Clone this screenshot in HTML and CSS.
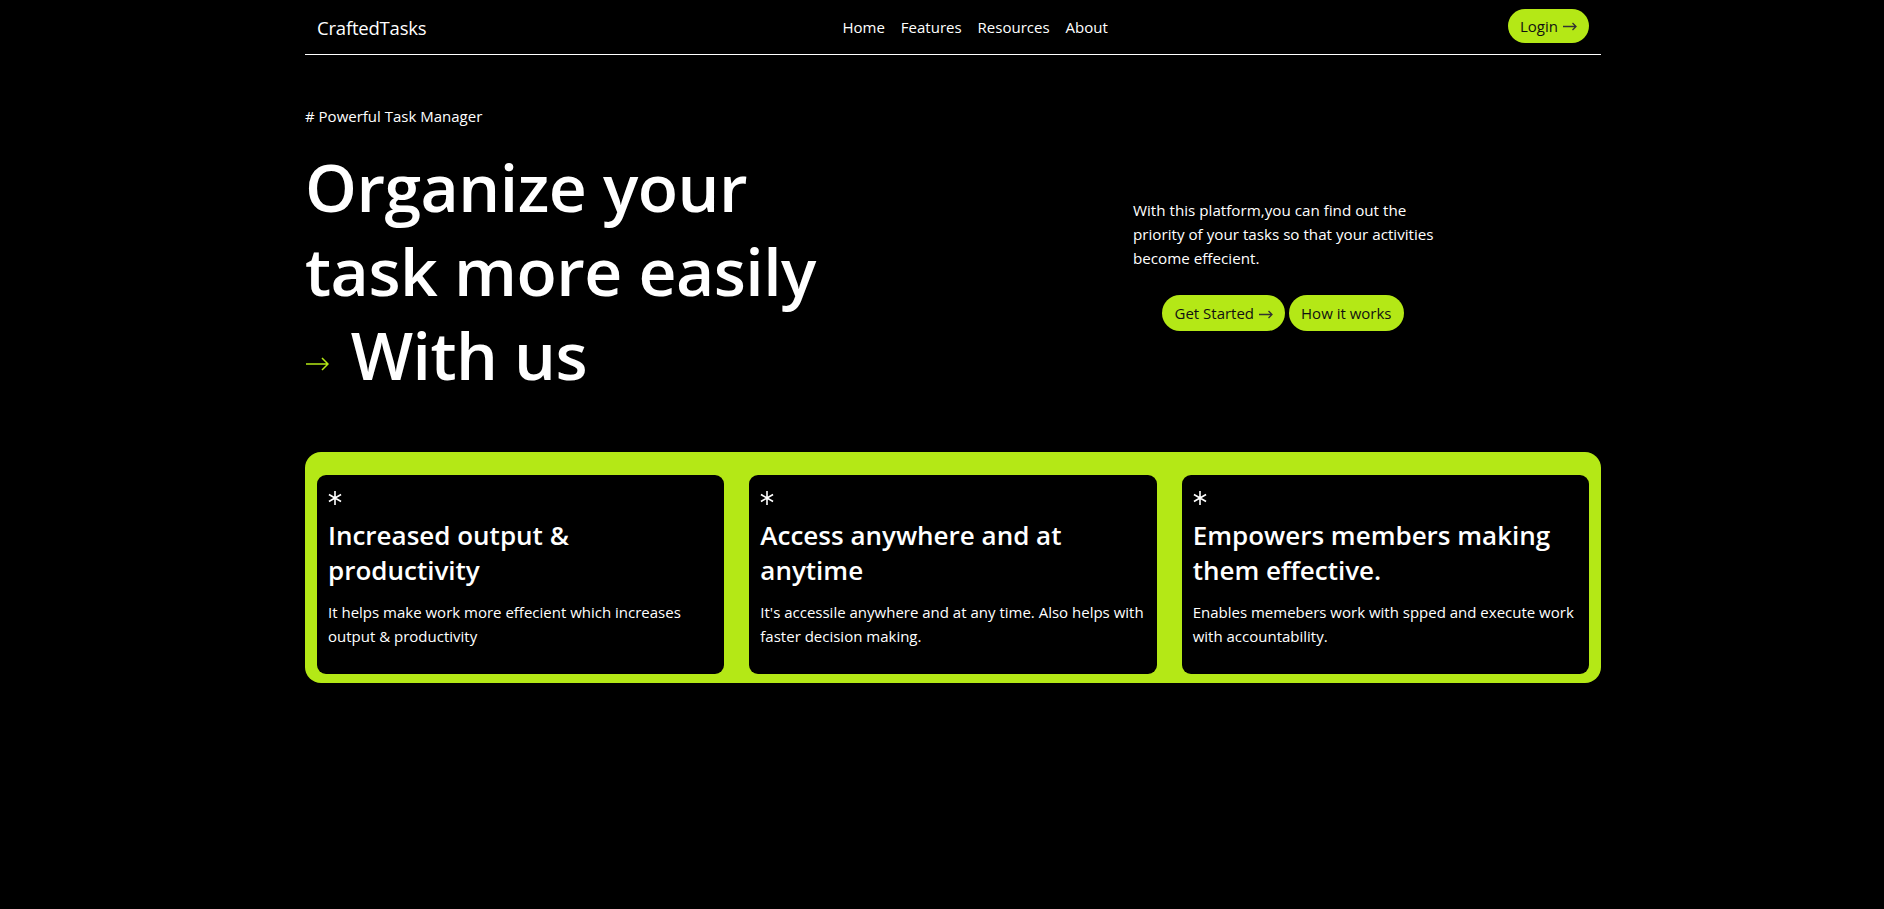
FILE: index.html
```html
<!DOCTYPE html>
<html lang="en">
<head>
<meta charset="utf-8">
<title>CraftedTasks</title>
<link rel="stylesheet" href="styles.css">
</head>
<body>
<div class="page">
  <header class="header">
    <div class="logo">CraftedTasks</div>
    <nav class="nav">
      <a href="#">Home</a>
      <a href="#">Features</a>
      <a href="#">Resources</a>
      <a href="#">About</a>
    </nav>
    <a class="btn btn-login" href="#">Login <svg class="arr" viewBox="0 0 14 9" width="14" height="9"><path d="M0 4.5h13M9.5 1l3.5 3.5L9.5 8" fill="none" stroke="#333" stroke-width="1.3"/></svg></a>
  </header>

  <section class="hero">
    <p class="tag"># Powerful Task Manager</p>
    <div class="hero-row">
      <h1 class="title">Organize your<br>task more easily<br><svg class="title-arrow" viewBox="0 0 23 14" width="23" height="14"><path d="M0 7h22M16 1l6 6-6 6" fill="none" stroke="#b4e816" stroke-width="1.5"/></svg> With us</h1>
      <div class="hero-side">
        <p class="lead">With this platform,you can find out the priority of your tasks so that your activities become effecient.</p>
        <div class="actions">
          <a class="btn" href="#">Get Started <svg class="arr" viewBox="0 0 14 9" width="14" height="9"><path d="M0 4.5h13M9.5 1l3.5 3.5L9.5 8" fill="none" stroke="#333" stroke-width="1.3"/></svg></a>
          <a class="btn" href="#">How it works</a>
        </div>
      </div>
    </div>
  </section>

  <section class="features">
    <div class="card">
      <svg class="star" viewBox="0 0 14 14" width="14" height="14"><path d="M7 0v14M0.94 3.5l12.12 7M0.94 10.5l12.12-7" stroke="#fff" stroke-width="1.6" fill="none"/></svg>
      <h2>Increased output &amp; productivity</h2>
      <p>It helps make work more effecient which increases output &amp; productivity</p>
    </div>
    <div class="card">
      <svg class="star" viewBox="0 0 14 14" width="14" height="14"><path d="M7 0v14M0.94 3.5l12.12 7M0.94 10.5l12.12-7" stroke="#fff" stroke-width="1.6" fill="none"/></svg>
      <h2>Access anywhere and at anytime</h2>
      <p>It's accessile anywhere and at any time. Also helps with faster decision making.</p>
    </div>
    <div class="card">
      <svg class="star" viewBox="0 0 14 14" width="14" height="14"><path d="M7 0v14M0.94 3.5l12.12 7M0.94 10.5l12.12-7" stroke="#fff" stroke-width="1.6" fill="none"/></svg>
      <h2>Empowers members making them effective.</h2>
      <p>Enables memebers work with spped and execute work with accountability.</p>
    </div>
  </section>
</div>
</body>
</html>
```

FILE: styles.css
```css
* { box-sizing: border-box; }

html, body {
  margin: 0;
  background: #000;
  color: #fff;
  font-family: "Open Sans", "Noto Sans", sans-serif;
}

.page {
  width: 1296px;
  margin-left: 305px;
}

a { color: inherit; text-decoration: none; }

.header {
  height: 55px;
  border-bottom: 1px solid #fff;
  display: flex;
  align-items: center;
  padding: 0 12px;
}

.logo {
  font-size: 18.5px;
  letter-spacing: -0.2px;
}

.nav {
  display: flex;
  gap: 16px;
  margin-left: 416px;
  font-size: 15px;
}

.btn {
  display: inline-flex;
  align-items: center;
  justify-content: center;
  background: #b4e816;
  color: #111;
  border-radius: 999px;
  font-size: 15px;
  height: 36px;
  padding: 0 12px;
}

.btn .arr { margin-left: 5px; margin-top: 2px; }

.btn-login {
  margin-left: auto;
  height: 34px;
  margin-top: -3px;
  padding: 0 12px;
}

.hero { padding-top: 51px; }

.tag {
  margin: 0;
  font-size: 15px;
  line-height: 20px;
}

.hero-row {
  display: flex;
  align-items: flex-start;
}

.title {
  margin: 18px 0 0;
  width: 828px;
  font-size: 66px;
  font-weight: 600;
  line-height: 84px;
  letter-spacing: -0.5px;
}

.title-arrow {
  display: inline-block;
  vertical-align: middle;
  margin: 4px 5px 0 1px;
}

.hero-side {
  width: 300px;
  margin-top: 72px;
}

.lead {
  margin: 0 -24px 0 0;
  font-size: 15.2px;
  line-height: 24px;
}

.actions {
  display: flex;
  justify-content: center;
  gap: 4px;
  margin-top: 25px;
}

.features {
  margin-top: 56px;
  background: #b4e816;
  border-radius: 16px;
  padding: 23px 12px 9px;
  display: grid;
  grid-template-columns: repeat(3, 1fr);
  gap: 25px;
}

.card {
  background: #000;
  border-radius: 9px;
  padding: 16px 10px 20px 11px;
  height: 199px;
}

.star { display: block; margin-bottom: 13px; }

.card h2 {
  margin: 0;
  font-size: 26px;
  font-weight: 600;
  line-height: 35px;
}

.card p {
  margin: 12px 0 0;
  font-size: 15px;
  line-height: 24px;
}
```
